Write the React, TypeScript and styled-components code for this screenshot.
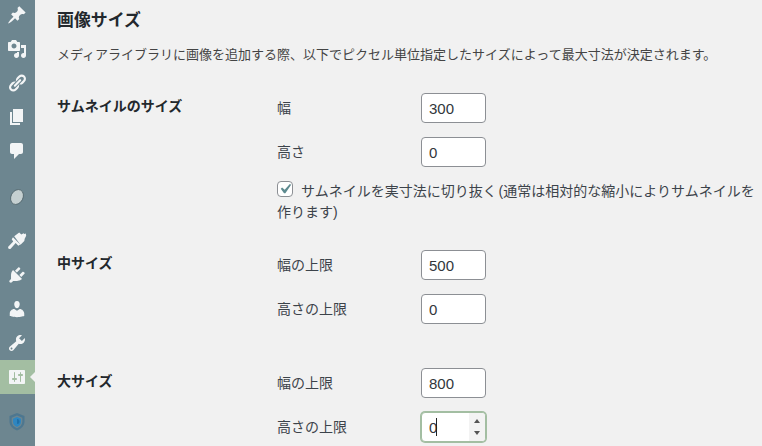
import React from "react";
import styled, { createGlobalStyle } from "styled-components";

const GlobalStyle = createGlobalStyle`
    html, body {
        margin: 0;
        height: 100%;
        overflow: hidden;
        background: #f1f1f1;
    }
    body {
        font-family: "Liberation Sans", "Noto Sans CJK JP", sans-serif;
        font-size: 13px;
        color: #444;
    }
`;

const dashicons = {
    pin: "M10.44 3.02l1.82-1.82 6.36 6.35-1.83 1.82c-1.05-.68-2.48-.57-3.41.36l-.75.75c-.92.93-1.04 2.35-.35 3.41l-1.83 1.82-2.41-2.41-2.8 2.79c-.42.42-3.38 2.71-3.8 2.29s1.86-3.39 2.28-3.81l2.79-2.79L4.1 9.36l1.83-1.82c1.05.69 2.48.57 3.4-.36l.75-.75c.93-.92 1.05-2.35.36-3.41z",
    media: "M13 11V4c0-.55-.45-1-1-1h-1.67L9 1H5L3.67 3H2c-.55 0-1 .45-1 1v7c0 .55.45 1 1 1h10c.55 0 1-.45 1-1zM7 4.5c1.38 0 2.5 1.12 2.5 2.5S8.38 9.5 7 9.5 4.5 8.38 4.5 7 5.62 4.5 7 4.5zM14 6h5v10.5c0 1.38-1.12 2.5-2.5 2.5S14 17.88 14 16.5s1.12-2.5 2.5-2.5c.17 0 .34.02.5.05V9h-3V6zm-4 8.05V13h2v3.5c0 1.38-1.12 2.5-2.5 2.5S7 17.88 7 16.5 8.12 14 9.5 14c.17 0 .34.02.5.05z",
    links: "M17.74 2.76c1.68 1.69 1.68 4.41 0 6.1l-1.53 1.52c-1.12 1.12-2.7 1.47-4.14 1.09l2.62-2.61.76-.77.76-.76c.84-.84.84-2.2 0-3.04-.84-.85-2.2-.85-3.04 0l-.77.76-3.38 3.38c-.37-1.44-.02-3.02 1.1-4.14l1.52-1.53c1.69-1.68 4.42-1.68 6.1 0zM8.59 13.43l5.34-5.34c.42-.42.42-1.1 0-1.52-.44-.43-1.13-.39-1.53 0l-5.33 5.34c-.42.42-.42 1.1 0 1.52.44.43 1.13.39 1.52 0zm-.76 2.29l4.14-4.15c.38 1.44.03 3.02-1.09 4.14l-1.52 1.53c-1.69 1.68-4.41 1.68-6.1 0-1.68-1.68-1.68-4.42 0-6.1l1.53-1.52c1.12-1.12 2.7-1.47 4.14-1.1l-4.14 4.15c-.85.84-.85 2.2 0 3.05.84.84 2.2.84 3.04 0z",
    page: "M6 15V2h10v13H6zm-1 1h8v2H3V5h2v11z",
    comments: "M5 2h9c1.1 0 2 .9 2 2v7c0 1.1-.9 2-2 2h-2l-5 5v-5H5c-1.1 0-2-.9-2-2V4c0-1.1.9-2 2-2z",
    appearance: "M7.2 5.2l5-3.7 2.100 1.900 2.300-1.100.7.6 1.500-.4.4 2.300-1.500 3-.4 2.200-3.800 3.700zM6 6.300l7.200 7.200-1.900 1.200-2.600-2.600-4.800 5.400c-1.200 1.200-3.300.4-2.700-1.700l5-5.200-1.500-2.300z",
    plugins: "M13.11 4.36L9.87 7.6 8 5.73l3.24-3.24c.35-.34 1.05-.2 1.56.32.52.51.66 1.21.31 1.55zm-8 1.77l.91-1.12 9.01 9.01-1.19.84c-.71.71-2.63 1.16-3.82 1.16H6.14L4.9 17.26c-.59.59-1.54.59-2.12 0-.59-.58-.59-1.53 0-2.12l1.24-1.24v-3.88c0-1.13.4-3.19 1.09-3.89zm7.26 3.97l3.24-3.24c.34-.35 1.04-.21 1.55.31.52.51.66 1.21.31 1.55l-3.24 3.25z",
    users: "M10 9.25c-2.27 0-2.73-3.44-2.73-3.44C7 4.02 7.82 2 9.97 2c2.16 0 2.98 2.02 2.71 3.81 0 0-.41 3.44-2.68 3.44zm0 2.57L12.72 10c2.39 0 4.52 2.33 4.52 4.53v2.49s-3.65 1.13-7.24 1.13c-3.65 0-7.24-1.13-7.24-1.13v-2.49c0-2.25 1.94-4.48 4.47-4.48z",
    tools: "M16.68 9.77c-1.34 1.34-3.3 1.67-4.95.99l-5.41 6.52c-.99.99-2.59.99-3.58 0s-.99-2.59 0-3.57l6.52-5.42c-.68-1.65-.35-3.61.99-4.95 1.28-1.28 3.12-1.62 4.72-1.06l-2.89 2.89 2.82 2.82 2.86-2.87c.53 1.58.18 3.39-1.08 4.65zM3.81 16.21c.4.39 1.04.39 1.43 0 .4-.4.4-1.04 0-1.43-.39-.4-1.03-.4-1.43 0-.39.39-.39 1.03 0 1.43z",
    settings: "M18 16V4c0-.55-.45-1-1-1H3c-.55 0-1 .45-1 1v12c0 .55.45 1 1 1h14c.55 0 1-.45 1-1zM8 11h1c.55 0 1 .45 1 1s-.45 1-1 1H8v1.5c0 .28-.22.5-.5.5s-.5-.22-.5-.5V13H6c-.55 0-1-.45-1-1s.45-1 1-1h1V5.5c0-.28.22-.5.5-.5s.5.22.5.5V11zm5-2h-1c-.55 0-1-.45-1-1s.45-1 1-1h1V5.5c0-.28.22-.5.5-.5s.5.22.5.5V7h1c.55 0 1 .45 1 1s-.45 1-1 1h-1v5.5c0 .28-.22.5-.5.5s-.5-.22-.5-.5V9z",
};

function DashIcon({ d }: { d: string }) {
    return (
        <svg width='20' height='20' viewBox='0 0 20 20' fill='#f3f5f6'>
            <path d={d} fillRule='evenodd' />
        </svg>
    );
}

function App() {
    return (
        <>
            <GlobalStyle />
            <Page>
                <Sidebar>
                    <MenuItem><DashIcon d={dashicons.pin} /></MenuItem>
                    <MenuItem><DashIcon d={dashicons.media} /></MenuItem>
                    <MenuItem><DashIcon d={dashicons.links} /></MenuItem>
                    <MenuItem><DashIcon d={dashicons.page} /></MenuItem>
                    <MenuItem><DashIcon d={dashicons.comments} /></MenuItem>
                    <MenuItem $gap={12}>
                        <svg width='20' height='20' viewBox='0 0 20 20'>
                            <ellipse cx='10' cy='10' rx='6' ry='7.800' transform='rotate(28 10 10)' fill='#c5d0d1' stroke='#4f636a' strokeWidth='0.8' />
                        </svg>
                    </MenuItem>
                    <MenuItem $gap={10}><DashIcon d={dashicons.appearance} /></MenuItem>
                    <MenuItem><DashIcon d={dashicons.plugins} /></MenuItem>
                    <MenuItem><DashIcon d={dashicons.users} /></MenuItem>
                    <MenuItem><DashIcon d={dashicons.tools} /></MenuItem>
                    <MenuItem $active><DashIcon d={dashicons.settings} /></MenuItem>
                    <MenuItem $gap={11}>
                        <svg width='20' height='20' viewBox='0 0 20 20'>
                            <path d='M10 1l7.500 3v5.500c0 4.200-3.200 7.300-7.500 9-4.300-1.700-7.500-4.800-7.500-9V4z' fill='#4d7790' />
                            <path d='M10 3.500l5.300 2.200v4c0 3-2.200 5.200-5.300 6.500-3.100-1.300-5.300-3.500-5.300-6.500v-4z' fill='#6d8690' />
                            <path d='M10 5l-4 1.700v3c0 2.500 1.700 4.200 4 5.200 2.300-1 4-2.700 4-5.200v-3z' fill='#2e86c1' />
                            <path d='M10 7a2.500 2.500 0 0 1 0 5z' fill='#1f6fa8' />
                        </svg>
                    </MenuItem>
                </Sidebar>
                <Content>
                    <Title>画像サイズ</Title>
                    <Description>メディアライブラリに画像を追加する際、以下でピクセル単位指定したサイズによって最大寸法が決定されます。</Description>

                    <Section $top={25}>
                        <SectionLabel>サムネイルのサイズ</SectionLabel>
                        <Fields>
                            <FieldRow>
                                <FieldLabel>幅</FieldLabel>
                                <NumberInput type='number' defaultValue={300} />
                            </FieldRow>
                            <FieldRow>
                                <FieldLabel>高さ</FieldLabel>
                                <NumberInput type='number' defaultValue={0} />
                            </FieldRow>
                            <CropOption>
                                <CheckBox>
                                    <CheckMark viewBox='0 0 20 20' fill='#5d8a8f'>
                                        <path d='M14.830 4.890l1.340.940-5.810 8.380H9.020L5.780 9.670l1.340-1.250 2.570 2.400z' />
                                    </CheckMark>
                                </CheckBox>
                                サムネイルを実寸法に切り抜く (通常は相対的な縮小によりサムネイルを作ります)
                            </CropOption>
                        </Fields>
                    </Section>

                    <Section $top={27}>
                        <SectionLabel>中サイズ</SectionLabel>
                        <Fields>
                            <FieldRow>
                                <FieldLabel>幅の上限</FieldLabel>
                                <NumberInput type='number' defaultValue={500} />
                            </FieldRow>
                            <FieldRow>
                                <FieldLabel>高さの上限</FieldLabel>
                                <NumberInput type='number' defaultValue={0} />
                            </FieldRow>
                        </Fields>
                    </Section>

                    <Section $top={44}>
                        <SectionLabel>大サイズ</SectionLabel>
                        <Fields>
                            <FieldRow>
                                <FieldLabel>幅の上限</FieldLabel>
                                <NumberInput type='number' defaultValue={800} />
                            </FieldRow>
                            <FieldRow>
                                <FieldLabel>高さの上限</FieldLabel>
                                <SpinField>
                                    <NumberInput type='number' defaultValue={0} $focused />
                                    <Caret />
                                    <Spinner>
                                        <SpinUp />
                                        <SpinDown />
                                    </Spinner>
                                </SpinField>
                            </FieldRow>
                        </Fields>
                    </Section>
                </Content>
            </Page>
        </>
    );
}

export default App;

const Page = styled.div`
    display: flex;
    width: 762px;
    height: 446px;
    overflow: hidden;
`;

const Sidebar = styled.nav`
    flex: 0 0 35px;
    display: flex;
    flex-direction: column;
    margin-top: -2px;
    background: #6d8690;
    height: 448px;
`;

const MenuItem = styled.div<{ $active?: boolean; $gap?: number }>`
    position: relative;
    flex: 0 0 34px;
    display: flex;
    align-items: center;
    justify-content: center;
    padding-right: 2px;
    margin-top: ${(p) => p.$gap ?? 0}px;
    background: ${(p) => (p.$active ? "#a3bea2" : "transparent")};
    ${(p) =>
        p.$active &&
        `&::after {
            content: "";
            position: absolute;
            right: 0;
            top: 50%;
            margin-top: -5px;
            border: 5px solid transparent;
            border-left-width: 0;
            border-right-color: #f1f1f1;
        }`}
`;

const Content = styled.main`
    flex: 1;
    min-width: 0;
    padding: 8px 0 0 22px;
`;

const Title = styled.h2`
    margin: 0;
    font-size: 16.9px;
    line-height: 26px;
    font-weight: 600;
    color: #23282d;
`;

const Description = styled.p`
    margin: 8px 0 0;
    font-size: 13px;
    line-height: 26px;
    color: #444;
`;

const Section = styled.section<{ $top: number }>`
    display: grid;
    grid-template-columns: 220px 1fr;
    margin-top: ${(p) => p.$top}px;
    font-size: 14px;
    color: #3c434a;
`;

const SectionLabel = styled.div`
    padding-top: 3px;
    font-weight: 600;
    line-height: 20px;
    color: #23282d;
`;

const Fields = styled.div`
    display: flex;
    flex-direction: column;
    gap: 14px;
`;

const FieldRow = styled.div`
    display: grid;
    grid-template-columns: 144px 65px;
    align-items: center;
    height: 30px;
`;

const FieldLabel = styled.span`
    line-height: 20px;
`;

const NumberInput = styled.input<{ $focused?: boolean }>`
    box-sizing: border-box;
    display: block;
    width: 65px;
    height: 30px;
    margin: 0;
    padding: 0 0 0 7px;
    font-family: inherit;
    font-size: 15px;
    color: #32373c;
    background: #fff;
    border: 1px solid ${(p) => (p.$focused ? "#a3bea2" : "#8c8f94")};
    border-radius: 4px;
    outline: none;
    box-shadow: ${(p) => (p.$focused ? "0 0 0 1px #a3bea2" : "none")};
    &::-webkit-inner-spin-button {
        -webkit-appearance: none;
    }
`;

const SpinField = styled.div`
    position: relative;
    width: 65px;
    height: 30px;
`;

const Caret = styled.span`
    position: absolute;
    left: 15px;
    top: 6px;
    width: 1px;
    height: 18px;
    background: #222;
`;

const Spinner = styled.div`
    position: absolute;
    right: 1px;
    top: 1px;
    bottom: 1px;
    width: 16px;
    display: flex;
    flex-direction: column;
    align-items: center;
    justify-content: center;
    gap: 8px;
    background: #f3f3f3;
    border-radius: 0 3px 3px 0;
`;

const SpinUp = styled.span`
    border: 3.5px solid transparent;
    border-top-width: 0;
    border-bottom: 4px solid #555;
`;

const SpinDown = styled.span`
    border: 3.5px solid transparent;
    border-bottom-width: 0;
    border-top: 4px solid #555;
`;

const CropOption = styled.div`
    line-height: 21px;
    word-spacing: -2px;
`;

const CheckBox = styled.span`
    box-sizing: border-box;
    display: inline-flex;
    align-items: center;
    justify-content: center;
    width: 16px;
    height: 16px;
    margin-right: 8px;
    vertical-align: -3px;
    background: #fff;
    border: 1px solid #8c8f94;
    border-radius: 4px;
`;

const CheckMark = styled.svg`
    flex: none;
    width: 20px;
    height: 20px;
    margin: -3px;
`;
